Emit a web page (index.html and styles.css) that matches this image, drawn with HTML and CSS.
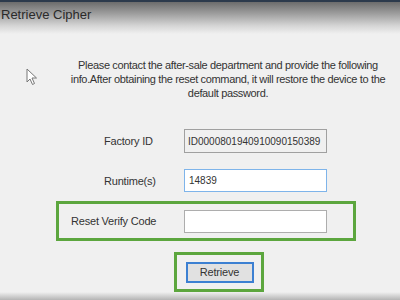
FILE: index.html
```html
<!DOCTYPE html>
<html lang="en">
<head>
    <meta charset="UTF-8">
    <meta name="viewport" content="width=device-width, initial-scale=1.0">
    <title>Retrieve Cipher</title>
    <link rel="stylesheet" href="styles.css">
</head>
<body>
    <div class="titlebar">Retrieve Cipher</div>

    <div class="dialog">
        <p class="notice">Please contact the after-sale department and provide the following info.After obtaining the reset command, it will restore the device to the default password.</p>

        <div class="row row-first">
            <label for="factory">Factory ID</label>
            <input type="text" id="factory" class="readonly" value="ID0000801940910090150389" readonly>
        </div>

        <div class="row row-second">
            <label for="runtime">Runtime(s)</label>
            <input type="text" id="runtime" class="focused" value="14839">
        </div>

        <div class="row highlight">
            <label for="code">Reset Verify Code</label>
            <input type="text" id="code">
        </div>

        <div class="btnbox">
            <button type="button">Retrieve</button>
        </div>

        <!-- mouse pointer seen in the capture -->
        <svg class="pointer" width="12" height="18" viewBox="0 0 12 18">
            <path d="M1 1 L1 14 L4 11 L6.5 16.5 L8.5 15.5 L6 10 L10.5 10 Z" fill="#fff" stroke="#777" stroke-width="1"/>
        </svg>
    </div>

    <div class="bottomshade"></div>
</body>
</html>
```

FILE: styles.css
```css
body {
    margin: 0;
    background-color: #f0f0f0;
    font-family: Tahoma, "Liberation Sans", Arial, sans-serif;
    font-size: 11px;
    color: #333;
    width: 400px;
    height: 300px;
    overflow: hidden;
}
.titlebar {
    height: 34px;
    box-sizing: border-box;
    border-top: 2px solid #2c3a4c;
    padding: 5px 0 0 1px;
    font-size: 13px;
    color: #2a2a2a;
    background: linear-gradient(#6c6c6c, #9c9c9c 35%, #d6d6d6 75%, #f0f0f0);
}
.dialog {
    position: relative;
    height: 234px;
    padding-top: 24px;
}
.notice {
    margin: 0 0 0 66px;
    width: 324px;
    text-align: center;
    line-height: 14px;
    letter-spacing: -0.35px;
}
.row {
    display: flex;
    align-items: center;
    padding-left: 104px;
}
.row label {
    width: 80px;
    flex-shrink: 0;
    letter-spacing: -0.2px;
}
.row input {
    width: 143px;
    height: 24px;
    box-sizing: border-box;
    margin: 0;
    padding: 0 4px;
    font-family: inherit;
    font-size: 11px;
    color: #333;
    border: 1px solid #adadad;
    background: #fff;
}
.row-first {
    margin-top: 29px;
}
.row-second {
    margin-top: 16px;
}
input.readonly {
    background: #f0f0f0;
    border-color: #a0a0a0;
    padding: 0 3px;
    font-size: 10px;
}
input.focused {
    border-color: #7eb4ea;
    height: 23px;
    font-size: 10px;
}
.highlight {
    margin: 9px 0 0 56px;
    width: 300px;
    height: 40px;
    box-sizing: border-box;
    border: 3px solid #5ca63e;
    padding-left: 12px;
}
.highlight label {
    width: 113px;
}
.highlight input {
    height: 23px;
}
.btnbox {
    margin: 11px 0 0 174px;
    width: 90px;
    height: 40px;
    box-sizing: border-box;
    border: 3px solid #5ca63e;
    display: flex;
    align-items: center;
    justify-content: center;
}
.btnbox button {
    width: 68px;
    height: 21px;
    margin-left: 1px;
    border: 2px solid #3c80d2;
    background: #e1e1e1;
    font-family: inherit;
    font-size: 11px;
    letter-spacing: -0.2px;
    color: #333;
    padding: 0;
}
.pointer {
    position: absolute;
    left: 26px;
    top: 34px;
}
.bottomshade {
    height: 8px;
    background: linear-gradient(#f0f0f0, #b4b4b4);
}
```
